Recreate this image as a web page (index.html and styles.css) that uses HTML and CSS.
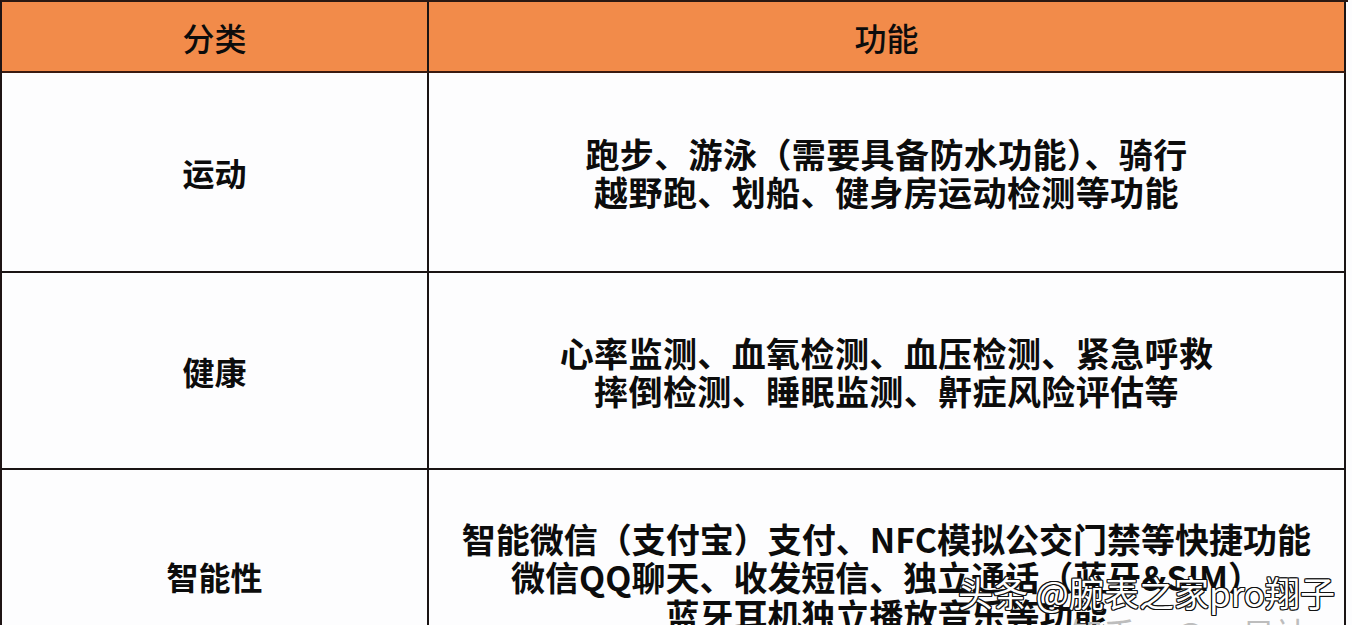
FILE: index.html
```html
<!DOCTYPE html>
<html lang="zh-CN">
<head>
<meta charset="utf-8">
<title>智能手表功能</title>
<link rel="stylesheet" href="styles.css">
</head>
<body>
<div class="page">
  <div class="table">
    <div class="cell head">分类</div>
    <div class="cell head">功能</div>

    <div class="cell label row1">运动</div>
    <div class="cell desc row1">
      <span>跑步、游泳（需要具备防水功能）、骑行</span>
      <span>越野跑、划船、健身房运动检测等功能</span>
    </div>

    <div class="cell label row2">健康</div>
    <div class="cell desc row2">
      <span>心率监测、血氧检测、血压检测、紧急呼救</span>
      <span>摔倒检测、睡眠监测、鼾症风险评估等</span>
    </div>

    <div class="cell label row3">智能性</div>
    <div class="cell desc row3">
      <span>智能微信（支付宝）支付、NFC模拟公交门禁等快捷功能</span>
      <span>微信QQ聊天、收发短信、独立通话（蓝牙&amp;SIM）</span>
      <span>蓝牙耳机独立播放音乐等功能</span>
    </div>
  </div>
  <div class="mark">头条 @腕表之家pro翔子</div>
  <div class="mark2">知乎 @ 显袖</div>
</div>
</body>
</html>
```

FILE: styles.css
```css
html, body {
  margin: 0;
  padding: 0;
  background: #fdfdfe;
  overflow: hidden;
}
body {
  width: 1352px;
  height: 625px;
  font-family: "Noto Sans CJK SC", "Noto Sans", sans-serif;
  color: #0c0c0c;
}
.page {
  position: relative;
  width: 1352px;
  height: 625px;
  overflow: hidden;
}
.table {
  display: grid;
  grid-template-columns: 427px 917px;
  grid-template-rows: 71px 200px 197px 218px;
  width: 1346px;
  border-left: 2px solid #1e1414;
  border-top: 2px solid #2a1812;
}
.cell {
  border-right: 2px solid #1a1414;
  border-bottom: 2px solid #1a1414;
  display: flex;
  flex-direction: column;
  align-items: center;
  justify-content: center;
  background: #fdfdfe;
}
.head {
  background: #f28b4a;
  font-size: 32px;
  font-weight: 500;
  border-bottom-color: #3a1a10;
  padding-top: 0;
}
.label {
  font-size: 32px;
  font-weight: 700;
  padding-top: 0;
}
.row3.label { padding-top: 0; padding-bottom: 4px; }
.desc {
  font-size: 34px;
  font-weight: 700;
  line-height: 38px;
  padding-top: 2px;
  letter-spacing: 0.4px;
}
.row2.desc { padding-top: 2px; }
.row3.desc { letter-spacing: 0; padding-top: 0; padding-bottom: 2px; }
.desc span { display: block; white-space: nowrap; }
.mark {
  position: absolute;
  left: 958px;
  top: 566px;
  font-size: 35px;
  font-weight: 400;
  color: #ffffff;
  white-space: nowrap;
  text-shadow: 1px 0 0 #111, -1px 0 0 #111, 0 1px 0 #111, 0 -1px 0 #111,
    1px 1px 0 #111, -1px -1px 0 #111, 1px -1px 0 #111, -1px 1px 0 #111;
}
.mark2 {
  position: absolute;
  left: 1070px;
  top: 609px;
  font-size: 33px;
  color: #bdbdbd;
  white-space: nowrap;
  word-spacing: 30px;
}
```
